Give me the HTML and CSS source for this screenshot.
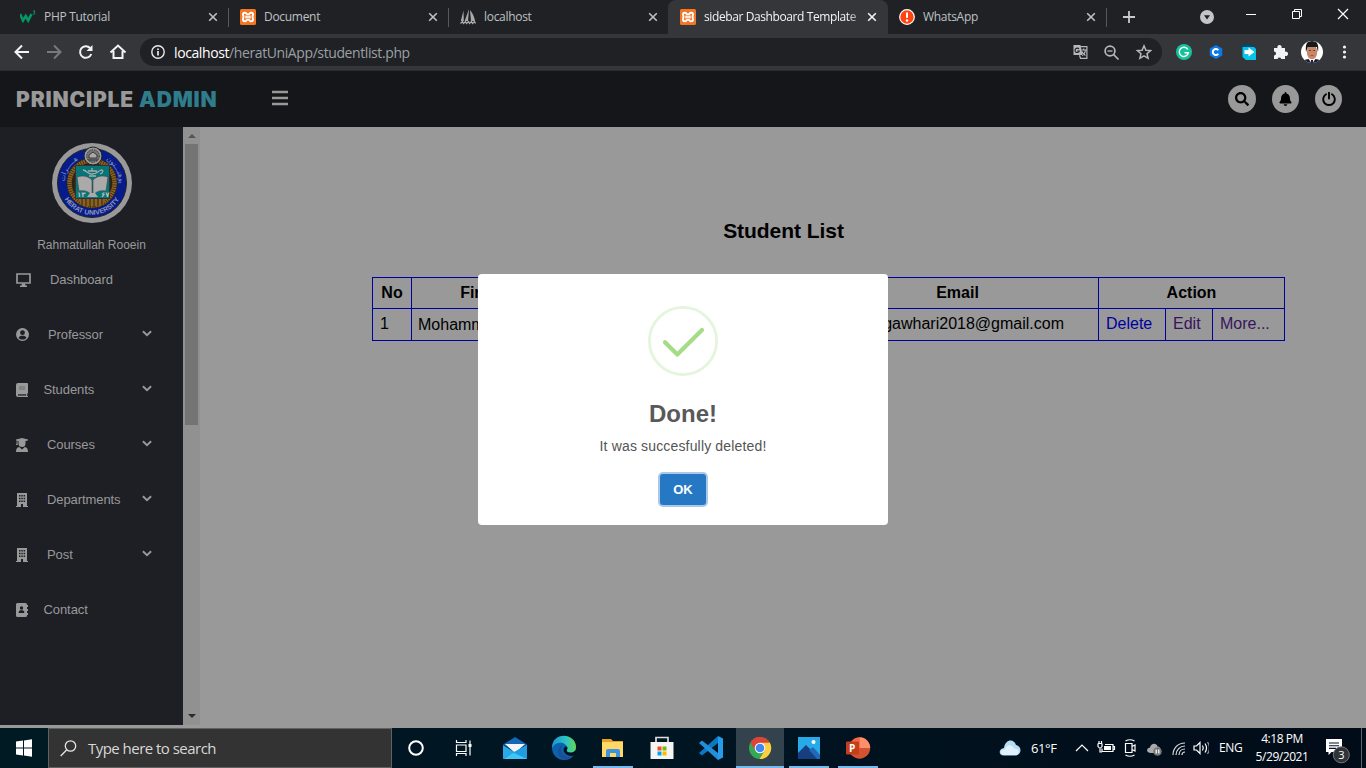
FILE: index.html
```html
<!DOCTYPE html>
<html lang="en">
<head>
<meta charset="utf-8">
<title>sidebar Dashboard Template</title>
<link rel="stylesheet" href="styles.css">
</head>
<body>
<svg class="defs" width="0" height="0">
  <symbol id="xampp" viewBox="0 0 16 16"><rect width="16" height="16" rx="1.5" fill="#f37623"/><path d="M5 3.7C3 3.7 2.6 5 3.2 6.6c.4 1 .4 1.800 0 2.800C2.600 11 3 12.300 5 12.300c1.500 0 1.400-1.800 3-1.800s1.500 1.800 3 1.800c2 0 2.400-1.300 1.800-2.900-.4-1-.4-1.800 0-2.800C13.400 5 13 3.700 11 3.700c-1.500 0-1.400 1.800-3 1.800S6.500 3.700 5 3.700z" fill="none" stroke="#fff" stroke-width="1.900"/><path d="M5.500 8h5M6 6.500v3M10 6.500v3" stroke="#fff" stroke-width="1.300"/></symbol>
  <symbol id="close" viewBox="0 0 10 10"><path d="M1.200 1.200l7.600 7.600M8.800 1.200L1.200 8.800" stroke="currentColor" stroke-width="1.600"/></symbol>
  <symbol id="down" viewBox="0 0 10 7"><path d="M.900 1.200L5 5.200l4.100-4" fill="none" stroke="currentColor" stroke-width="1.900"/></symbol>
  <symbol id="building" viewBox="0 0 12 14"><path fill="currentColor" fill-rule="evenodd" d="M1 0h10v13h1v1H7v-3H5v3H0v-1h1zM3 2v1.500h1.500V2zm2.300 0v1.500h1.500V2zm2.300 0v1.500h1.500V2zM3 4.700v1.500h1.500V4.700zm2.300 0v1.500h1.500V4.700zm2.300 0v1.500h1.500V4.700zM3 7.400v1.500h1.500V7.400zm2.300 0v1.500h1.500V7.400zm2.300 0v1.500h1.500V7.400z"/></symbol>
</svg>

<div class="tabs">
  <div class="tab"><svg class="fav" viewBox="0 0 16 16"><path d="M0 5l3 6.500L5.700 7l2.500 4.500L11.500 5" fill="none" stroke="#059862" stroke-width="2.600"/><path d="M13 2h2l-1.200 1.300c1.600 0 1.600 2.300-.8 2" fill="none" stroke="#059862"/></svg><span>PHP Tutorial</span><svg class="x"><use href="#close"/></svg></div>
  <div class="tab"><svg class="fav"><use href="#xampp"/></svg><span>Document</span><svg class="x"><use href="#close"/></svg></div>
  <div class="tab noline"><svg class="fav" viewBox="0 0 16 16"><path d="M3.500 1.500L.8 12h3zM9 0L4.700 12H8zM10 1c3 4 4.500 7 5 11h-4z" fill="#aaa"/><path d="M.5 14.500l2-2 1 2 2-2 1 2 2-2 1 2 2-2 1 2 2-2 1 2" fill="none" stroke="#aaa" stroke-width="1.300"/></svg><span>localhost</span><svg class="x"><use href="#close"/></svg></div>
  <div class="tab active"><svg class="fav"><use href="#xampp"/></svg><span>sidebar Dashboard Template</span><svg class="x"><use href="#close"/></svg></div>
  <div class="tab last"><svg class="fav" viewBox="0 0 16 16"><circle cx="8" cy="8" r="7.300" fill="#ff4413" stroke="#fff" stroke-width="1.200"/><path d="M8 3.500v5.200" stroke="#fff" stroke-width="2"/><circle cx="8" cy="11.500" r="1.200" fill="#fff"/></svg><span>WhatsApp</span><svg class="x"><use href="#close"/></svg></div>
  <svg class="plus" viewBox="0 0 12 12"><path d="M6 0v12M0 6h12" stroke="#c8cacd" stroke-width="1.800"/></svg>
  <svg class="winctl" viewBox="0 0 174 34"><circle cx="15" cy="17" r="7" fill="#c2c5c9"/><path d="M12 15.300h6L15 19.500z" fill="#202124"/><path d="M54 14.500h10" stroke="#fff"/><path d="M100.500 11.500h7v7h-7zM102.500 11.500v-2h7v7h-2" fill="none" stroke="#fff"/><path d="M146 9l10 10M156 9l-10 10" stroke="#fff" stroke-width="1.200"/></svg>
</div>

<div class="toolbar">
  <svg class="nav" viewBox="0 0 132 36" fill="none" stroke="#f1f3f4" stroke-width="2"><path d="M29 18H16.500M22 11.500L15.500 18l6.500 6.500"/><path stroke="#77797c" d="M47 18h12.500M54 11.500l6.500 6.500-6.500 6.500"/><path d="M91.300 20a5.800 5.800 0 1 1-1.200-6"/><path d="M92.500 11v6h-6z" fill="#f1f3f4" stroke="none"/><path d="M110.500 18.500l7.500-7 7.500 7M113.500 17v7h9v-7" /></svg>
  <div class="omni">
    <svg class="info" viewBox="0 0 14 14"><circle cx="7" cy="7" r="6.200" fill="none" stroke="#e8eaed" stroke-width="1.400"/><path d="M7 6v4.500M7 3.500v1.600" stroke="#e8eaed" stroke-width="1.700"/></svg>
    <span class="url"><b>localhost</b>/heratUniApp/studentlist.php</span>
    <svg class="omi" viewBox="-1.500 0 96 36"><path fill="#b5b8bc" d="M6 11h7l2 10H6z"/><path fill="none" stroke="#b5b8bc" stroke-width="1.200" d="M13 12.600h6.400v11.700H13l-1-3M13.800 16h5M16.200 14.500V16M14.500 21.500c2-1 3.300-3 3.300-5.500M14.500 17.500c.5 2 2 3.300 3.500 4"/><path d="M11.500 15a2.200 2.200 0 1 0 .3 2H9.700" fill="none" stroke="#202124" stroke-width="1.100"/><g fill="none" stroke="#b5b8bc" stroke-width="1.700"><circle cx="42.500" cy="17" r="4.900"/><path d="M46 20.500l5 5"/><path stroke-width="1.300" d="M40 17h5"/></g><path d="M76.500 11.800l1.900 4.400 4.700.4-3.600 3.100 1.100 4.600-4.100-2.400-4.100 2.400 1.100-4.600-3.600-3.100 4.700-.4z" fill="none" stroke="#b5b8bc" stroke-width="1.500"/></svg>
  </div>
  <svg class="ext" viewBox="0 0 204 36"><circle cx="22" cy="18" r="8" fill="#15c39a"/><path d="M25.800 15.500a4.600 4.600 0 1 0 .6 3.200H22.500" fill="none" stroke="#fff" stroke-width="1.400"/><path d="M54 11l6.200 3.500v7L54 25l-6.200-3.500v-7z" fill="#0b79e8"/><path d="M56.300 16.300a3 3 0 1 0 0 3.400" fill="none" stroke="#fff" stroke-width="2"/><path d="M79.500 10.500h12l-2 8h-8v-3h-2z" fill="#00486c"/><path d="M80.500 13h11.500l2 2v11H84l-3.500-3z" fill="#06c5e8"/><path d="M82.500 16h4v-2.500l6 4.500-6 4.500V20h-4z" fill="#fff"/><path d="M112 14h3.500a2.200 2.200 0 1 1 4 0h3.500v3.800a2.200 2.200 0 1 1 0 4V25h-3.700a2 2 0 0 0-3.800 0H112v-3.500a2 2 0 1 0 0-4z" fill="#f1f3f4"/><g><clipPath id="ava"><circle cx="150" cy="18" r="11"/></clipPath><g clip-path="url(#ava)"><path fill="#fff" d="M138 6h24v24h-24z"/><path fill="#182036" d="M140 30c1-5 5-5 10-5s9 0 10 5z"/><path fill="#fff" d="M146 24h8l-4 6z"/><ellipse cx="150" cy="18" rx="5.200" ry="7.300" fill="#c88768"/><path d="M144 18c-1-8 1-11 6-11s7 3 6 11l-1.200-5h-9z" fill="#17191d"/><path d="M147 16.500h2M151 16.500h2" stroke="#6b4536"/><path d="M148.500 21.500h3" stroke="#9d5348"/><path d="M149 26h2v4h-2z" fill="#182036"/></g></g><g fill="#f1f3f4"><circle cx="182.500" cy="13" r="1.600"/><circle cx="182.500" cy="18" r="1.600"/><circle cx="182.500" cy="23" r="1.600"/></g></svg>
</div>

<header class="header">
  <div class="brand">PRINCIPLE <em>ADMIN</em></div>
  <svg class="burger" viewBox="0 0 16 16"><path d="M0 2h16M0 8h16M0 14h16" stroke="#999" stroke-width="2.600"/></svg>
  <div class="round"><svg width="14" height="14" viewBox="0 0 512 512"><path d="M505 442.700L405.300 343c-4.500-4.500-10.600-7-17-7H372c27.600-35.300 44-79.700 44-128C416 93.100 322.900 0 208 0S0 93.100 0 208s93.100 208 208 208c48.300 0 92.700-16.400 128-44v16.300c0 6.400 2.500 12.500 7 17l99.700 99.700c9.400 9.400 24.600 9.400 33.900 0l28.300-28.300c9.400-9.400 9.400-24.600.1-34zM208 336c-70.700 0-128-57.200-128-128 0-70.700 57.200-128 128-128 70.700 0 128 57.200 128 128 0 70.700-57.200 128-128 128z"/></svg></div>
  <div class="round narrow"><svg width="13" height="14" viewBox="0 0 448 512"><path d="M224 512c35.320 0 63.970-28.650 63.970-64H160.030c0 35.350 28.650 64 63.970 64zm215.390-149.710c-19.320-20.760-55.470-51.990-55.470-154.290 0-77.700-54.480-139.900-127.940-155.160V32c0-17.670-14.320-32-31.980-32s-31.980 14.330-31.980 32v20.840C118.560 68.100 64.080 130.300 64.080 208c0 102.300-36.150 133.530-55.470 154.290-6 6.450-8.660 14.160-8.610 21.710.11 16.400 12.980 32 32.100 32h383.800c19.120 0 32-15.600 32.100-32 .05-7.550-2.610-15.270-8.610-21.710z"/></svg></div>
  <div class="round narrow"><svg width="14" height="14" viewBox="0 0 14 14"><path d="M4 2.300a5.800 5.800 0 1 0 6 0M7 .5v6" fill="none" stroke="#000" stroke-width="1.900" stroke-linecap="round"/></svg></div>
</header>

<div class="page">
  <nav class="side">
    <svg class="seal" viewBox="0 0 80 80">
      <circle cx="40" cy="40" r="40" fill="#999"/><circle cx="40" cy="40" r="34.500" fill="#071c8c" stroke="#222" stroke-width="1"/><circle cx="40" cy="40" r="25.500" fill="#2b2518"/><circle cx="40" cy="40" r="22.500" fill="none" stroke="#8d611e" stroke-width="4.500" stroke-dasharray="1.700 .6"/>
      <path d="M26 55h28l-4 8H30z" fill="#8d611e"/><path d="M30 55v8M34 55v8M38 55v9M42 55v9M46 55v8M50 55v8" stroke="#2b2518"/>
      <path d="M23.500 22.500h34v33h-34z" fill="#067577" stroke="#333"/>
      <circle cx="41" cy="13" r="9" fill="#999" stroke="#222"/><circle cx="41" cy="13" r="6.300" fill="#777" stroke="#333" stroke-dasharray="1.500 1"/><path d="M37 15v-3l4-3 4 3v3zM36 17h10" fill="#aaa" stroke="#222" stroke-width=".8"/>
      <path d="M25 34c6-2 11-1 15 3v15c-4-4-8-5-13-4zM56 34c-6-2-11-1-15 3v15c4-4 8-5 13-4z" fill="#aaa" stroke="#444" stroke-width=".6"/><path d="M38 50h5l3 4H35z" fill="#aaa"/>
      <path d="M31 27c5 1 4 4 9 4s6-3 9-4c3 0 2 3-1 4M36 28h9M40 25v3M37 33h7" fill="none" stroke="#aaa" stroke-width="1.300"/>
      <path id="arcb" d="M8.200 40a31.800 31.800 0 0 0 63.600 0" fill="none"/><text class="sealtext"><textPath href="#arcb" startOffset="50%" text-anchor="middle">HERAT UNIVERSITY</textPath></text>
      <path id="arcl" d="M13 45A27.500 27.500 0 0 1 32 14" fill="none"/><path id="arcr" d="M50 15A27.500 27.500 0 0 1 67 45" fill="none"/>
      <text class="sealar"><textPath href="#arcl" startOffset="50%" text-anchor="middle">هـــــرات</textPath></text><text class="sealar"><textPath href="#arcr" startOffset="50%" text-anchor="middle">پوهنـــتون</textPath></text>
      <text class="sealnum" x="25" y="54">۱۳</text><text class="sealnum" x="49" y="54">۶۷</text>
    </svg>
    <div class="name">Rahmatullah Rooein</div>
    <ul class="menu">
      <li class="g1"><svg width="15" height="14" viewBox="0 0 15 14"><path d="M1 1h13v9H1z" fill="none" stroke="#999" stroke-width="1.700"/><path d="M6 10.500h3l.5 2H11V14H4v-1.500h1.500z" fill="#999"/></svg>Dashboard</li>
      <li class="g2"><svg width="13" height="13" viewBox="0 0 13 13"><circle cx="6.500" cy="6.500" r="6.500" fill="#999"/><circle cx="6.500" cy="4.700" r="2.400" fill="#1e1f25"/><path d="M2.600 10c.6-2 2-2.300 3.900-2.300s3.300.3 3.900 2.300c-2.200 2-5.600 2-7.800 0z" fill="#1e1f25"/></svg>Professor<svg class="dn"><use href="#down"/></svg></li>
      <li class="g3"><svg width="12" height="14" viewBox="0 0 12 14"><path d="M2 0h9a1 1 0 0 1 1 1v9l-.8 1v2h.8v1H2a2 2 0 0 1-2-2V2a2 2 0 0 1 2-2z" fill="#999"/><path d="M2 11.300h8.200v1.300H2z" fill="#1e1f25"/><path d="M3 4h6M3 6h6" stroke="#6b6b70"/></svg>Students<svg class="dn"><use href="#down"/></svg></li>
      <li class="g4"><svg width="12" height="14" viewBox="0 0 12 14"><path d="M6 0l6 1.500v1L9.500 3v2.500a3.500 3.500 0 0 1-7 0V3L1.500 2.800V5L2 7H0l.6-2V2.600L0 2.500v-1zM3.200 9L6 11.500 8.800 9C11 9.500 12 11 12 14H0c0-3 1-4.500 3.200-5z" fill="#999"/></svg>Courses<svg class="dn"><use href="#down"/></svg></li>
      <li class="g4"><svg width="12" height="14"><use href="#building"/></svg>Departments<svg class="dn"><use href="#down"/></svg></li>
      <li class="g4"><svg width="12" height="14"><use href="#building"/></svg>Post<svg class="dn"><use href="#down"/></svg></li>
      <li class="g3"><svg width="12" height="14" viewBox="0 0 12 14"><path d="M1.500 0h8A1.500 1.500 0 0 1 11 1.500V2h1v2h-1v2h1v2h-1v2h1v2h-1v.500A1.500 1.500 0 0 1 9.500 14h-8A1.500 1.500 0 0 1 0 12.500v-11A1.500 1.500 0 0 1 1.500 0z" fill="#999"/><circle cx="5.500" cy="5" r="1.700" fill="#1e1f25"/><path d="M2.700 10c0-2.500 1-2.800 2.800-2.800s2.800.3 2.800 2.800z" fill="#1e1f25"/></svg>Contact</li>
    </ul>
  </nav>
  <div class="scroll"><i class="up"></i><div class="thumb"></div><i class="dnarrow"></i></div>
  <main class="main">
    <h2>Student List</h2>
    <table>
      <colgroup><col class="c1"><col class="c2"><col class="c3"><col class="c4"><col class="c5"><col class="c6"><col class="c7"></colgroup>
      <tr><th>No</th><th>First Name</th><th>Last Name</th><th>Email</th><th colspan="3">Action</th></tr>
      <tr><td>1</td><td class="first">Mohammad</td><td></td><td class="mail">gawhari2018@gmail.com</td><td><a class="new">Delete</a></td><td><a>Edit</a></td><td><a>More...</a></td></tr>
    </table>
  </main>
  <div class="modal">
    <svg class="ok-icon" viewBox="0 0 70 70"><circle cx="35" cy="35" r="33.600" fill="none" stroke="#e4f5db" stroke-width="2.800"/><path d="M17 36.300L29.300 48.500 54 24" fill="none" stroke="#a5dc86" stroke-width="4.200" stroke-linecap="round" stroke-linejoin="round"/></svg>
    <h3>Done!</h3>
    <p>It was succesfully deleted!</p>
    <button>OK</button>
  </div>
</div>

<footer class="task">
  <svg class="start" viewBox="0 0 48 40"><path fill="#fff" d="M16 13.500l7-1v7h-7zM24 12.400l8-1.100v8.200h-8zM16 20.500h7v7l-7-1zM24 20.500h8v8.200l-8-1.100z"/></svg>
  <div class="search"><svg width="17" height="17" viewBox="0 0 17 17"><circle cx="10.500" cy="6" r="5.200" fill="none" stroke="#e6e6e6" stroke-width="1.300"/><path d="M6.800 9.800L.7 16" stroke="#e6e6e6" stroke-width="1.300"/></svg><span>Type here to search</span></div>
  <div class="apps">
    <div><svg viewBox="0 0 48 40"><circle cx="24" cy="20" r="6.800" fill="none" stroke="#fff" stroke-width="2"/></svg></div>
    <div><svg viewBox="0 0 48 40" fill="none" stroke="#fff" stroke-width="1.200"><path d="M15.500 12v2.500h9.500V12M15.500 17h9.500v6.500h-9.500zM15.500 28v-2.500h9.500V28M29 12.500v15"/><path d="M27.500 16h3v3h-3z" fill="#fff" stroke="none"/></svg></div>
    <div class="mailapp"><svg viewBox="0 0 48 40"><path d="M12 16.500L24 9l12 7.500-12 7z" fill="#1267b8"/><path d="M14 16h20l-10 9z" fill="#f4f5f8"/><path d="M12 17l12 7.500L12 31z" fill="#29a9ea"/><path d="M36 17v14H12z" fill="#3ec8f5"/><path d="M36 17v14L22 24.500z" fill="#1f9de0"/></svg></div>
    <div class="mailapp"><svg viewBox="0 0 48 40"><defs><linearGradient id="eg"><stop stop-color="#1894d8"/><stop offset=".6" stop-color="#2dc5c2"/><stop offset="1" stop-color="#62d94d"/></linearGradient></defs><circle cx="24" cy="20" r="12" fill="#0b62ad"/><path d="M12 20C12 3 36 5 36 19c0 5-5 7-9 5-2-1 0-2 0-4 0-6-11-8-15 0z" fill="url(#eg)"/><path d="M23 17c-4 3-1 12 6 12 3 0 5-1 5-2-5 8-16 4-16-3 0-4 2-6 5-7z" fill="#1b4f98"/><path d="M27.500 20c0 2-2 3 .5 4 3 1.500 6 0 7.500-1.500l1 0v2l-2 2c-1 1-2 1.500-3 1.500-5 0-9-4-7.500-8 1-2 3.500-2 3.500 0z" fill="#03111d"/></svg></div>
    <div class="run"><svg viewBox="0 0 48 40"><path d="M13 11h9l2 2h10v4H13z" fill="#e6a322"/><path d="M13 14h21v15H13z" fill="#ffd868"/><path d="M17 29v-6q0-2 2-2h10q2 0 2 2v6h-4v-4h-6v4z" fill="#3d94dc"/></svg></div>
    <div><svg viewBox="0 0 48 40"><path d="M18 14V9.500h12V14" fill="none" stroke="#ddd" stroke-width="1.700"/><path d="M12.500 14h23v17h-23z" fill="#f5f5f5"/><path d="M19.500 18.500h4v4h-4z" fill="#f25022"/><path d="M24.500 18.500h4v4h-4z" fill="#7fba00"/><path d="M19.500 23.500h4v4h-4z" fill="#00a4ef"/><path d="M24.500 23.500h4v4h-4z" fill="#ffb900"/></svg></div>
    <div><svg viewBox="0 0 48 40"><path d="M31 8l5 2.400v19.200L31 32z" fill="#259ce9"/><path d="M31 8v7L15 27.500 12 25z" fill="#0879c5"/><path d="M31 32v-7L15 12.500 12 15z" fill="#238fdb"/></svg></div>
    <div class="run cur"><svg viewBox="0 0 48 40"><circle cx="24" cy="20" r="11" fill="#34a853"/><path d="M24 20L14.500 14.500A11 11 0 0 1 33.500 14.500z" fill="#db4437"/><path d="M24 14.500h9.700A11 11 0 0 1 23.500 31L29 22z" fill="#ffcd40"/><path d="M14.500 14.500l5 8.500L24 14.500h9.500A11 11 0 0 0 14.500 14.500z" fill="#db4437"/><circle cx="24" cy="20" r="5.300" fill="#fff"/><circle cx="24" cy="20" r="4.300" fill="#4285f4"/></svg></div>
    <div class="run"><svg viewBox="0 0 48 40"><path d="M13 9h22v22H13z" fill="#28a9e8"/><path d="M13 25l8-8 14 14H13z" fill="#153f80"/><path d="M24 22l4-3 7 8v4h-3z" fill="#2268b8"/><circle cx="28.500" cy="14" r="2" fill="#fff"/></svg></div>
    <div class="run"><svg viewBox="0 0 48 40"><circle cx="25.500" cy="20" r="10.700" fill="#d35230"/><path d="M25.500 9.300A10.700 10.700 0 0 1 36.200 20H25.500z" fill="#ff8f6b"/><path d="M25.500 9.300V20h-10A10.700 10.700 0 0 1 25.500 9.300z" fill="#ed6c47"/><rect x="12" y="13.500" width="13" height="13" rx="1" fill="#c43e1c"/><text class="pp" x="15" y="24">P</text></svg></div>
  </div>
  <div class="tray">
    <svg class="cloud" viewBox="0 0 22 16"><path d="M5 15.500C-1 15.500-.5 8.500 5 8 6-1 15-2 17 5c6 1 6 9.500 0 10.500z" fill="#b9dcf5"/><path d="M4 15C-.5 12 3 9 6 9.500c1-5 7-6 9.500-.5 4-1 6 3 2 6z" fill="#e1f2ff"/></svg>
    <span class="temp">61°F</span>
    <svg class="sys" viewBox="0 0 138 40" fill="none" stroke="#fff" stroke-width="1.200"><path d="M5 23l6-6 6 6"/><path d="M34 16.500h8v7H31v-3M42.500 18.500h1v3h-1M27 15.500h4M27 15.500v3q2 3 4 0v-3M28 13v2.500M30.500 13v2.500M29 20v4h2"/><path d="M33 18h7v4h-7z" fill="#fff" stroke="none"/><path d="M54.500 15.500h6.500v9h-6.500zM61 18.500l3-1.500v6L61 21.500M54.500 13q4.500-2.500 9 0M54.500 27q4.500 2.500 9 0"/><path d="M80 25c-5 0-5-5-1-5.500 1-5 7-4.500 7.500-1 4 0 4 6.500 0 6.500z" fill="#aaa" stroke="none"/><circle cx="86.500" cy="23.500" r="4.300" fill="#777" stroke="none"/><path d="M85.200 21.500v4M87.800 21.500v4"/><g stroke="#ddd"><path d="M102 27c0-7 5-12 12-12M105 27c0-5 4-9 9-9M108 27c0-4 3-6 6-6M111 27c0-2 1-3 3-3"/></g><path d="M123 18h2.500l3.500-3.500v11l-3.500-3.500H123zM131.500 17.500q1.500 2.500 0 5M134 15.500q3 4.500 0 9"/><path stroke="#999" d="M136.500 14q4 6 0 12"/></svg>
    <span class="eng">ENG</span>
    <div class="clock"><span>4:18 PM</span><span class="date">5/29/2021</span></div>
    <svg class="note" viewBox="0 0 28 28"><path d="M1 3h16v13H6.500L3.500 19v-3H1z" fill="#fff"/><path d="M4 7h10M4 9.700h10M4 12.400h7" stroke="#071320" stroke-width="1.100"/><circle cx="16.300" cy="18.800" r="8" fill="#303338" stroke="#777"/><text class="badge" x="13.200" y="23">3</text></svg>
    <i class="peek"></i>
  </div>
</footer>
</body>
</html>
```

FILE: styles.css
```css
* { box-sizing: border-box; }
body { margin: 0; width: 1366px; height: 768px; overflow: hidden; display: flex; flex-direction: column; background: #999; font-family: "Liberation Sans", Arial, sans-serif; }
svg { display: block; flex: none; }
.defs { position: absolute; }

.tabs { height: 34px; flex: none; background: #202124; display: flex; align-items: center; padding-left: 8px; font: 12px "Open Sans", "Noto Sans", sans-serif; color: #bdc1c6; }
.tab { width: 220px; height: 34px; display: flex; align-items: center; padding: 0 10px 1px 12px; position: relative; letter-spacing: -.3px; }
.tab::after { content: ""; position: absolute; right: -1px; top: 8px; width: 1px; height: 19px; background: #55575b; }
.tab.noline::after, .tab.active::after { display: none; }
.tab.active { background: #35363a; border-radius: 8px 8px 0 0; color: #f1f3f4; padding-right: 11px; }
.tab.last { width: 218px; padding-left: 11px; }
.tab span { flex: 1; margin-left: 8px; white-space: nowrap; overflow: hidden; }
.tab.active span { -webkit-mask-image: linear-gradient(90deg, #000 88%, transparent); mask-image: linear-gradient(90deg, #000 88%, transparent); letter-spacing: -.4px; }
.fav { width: 16px; height: 16px; }
.x { width: 10px; height: 10px; }
.plus { width: 12px; height: 12px; margin-left: 17px; }
.winctl { width: 174px; height: 34px; margin-left: auto; }

.toolbar { height: 37px; flex: none; background: #35363a; border-bottom: 1px solid #2b2c2f; display: flex; align-items: center; }
.nav { width: 132px; height: 36px; }
.omni { width: 1022px; height: 28px; margin-left: 8px; border-radius: 14px; background: #202124; display: flex; align-items: center; padding-left: 11px; }
.info { width: 14px; height: 14px; }
.url { margin-left: 9px; font: 14px "Open Sans", "Noto Sans", sans-serif; color: #9aa0a6; letter-spacing: -.4px; }
.url b { font-weight: 400; color: #fff; }
.omi { width: 96px; height: 36px; margin-left: auto; }
.ext { width: 204px; height: 36px; }

.header { height: 56px; flex: none; background: #151619; display: flex; align-items: center; padding: 0 24px 0 16px; }
.brand { width: 256px; font: 900 21px Inter, sans-serif; color: #999; white-space: nowrap; letter-spacing: .85px; }
.brand em { font-style: normal; color: #2f7c8c; }
.burger { width: 16px; height: 16px; margin: -2px auto 0 0; }
.round { width: 28px; height: 28px; border-radius: 50%; background: #999; display: flex; align-items: center; justify-content: center; }
.round.narrow { width: 27px; height: 28px; margin-left: 16px; }

.page { height: 601px; flex: none; display: flex; position: relative; }
.side { width: 183px; height: 598px; background: #1e1f25; color: #999; padding-top: 16px; }
.seal { width: 80px; height: 80px; margin-left: 52px; }
.sealtext { font: bold 6.800px "Liberation Sans", sans-serif; fill: #8f97b5; }
.sealar { font: 7px "DejaVu Sans", sans-serif; fill: #8f97b5; }
.sealnum { font: bold 7px "DejaVu Sans", sans-serif; fill: #bbb; }
.name { height: 14px; line-height: 14px; margin: 15px 0 0; text-align: center; font-size: 12px; }
.menu { list-style: none; margin: 0; padding: 0 31px 0 16px; font-size: 13px; letter-spacing: -.08px; }
.menu li { height: 55px; display: flex; align-items: center; }
.menu li svg:first-child { margin-right: 15.500px; }
.menu .g1 svg:first-child, .menu .g2 svg:first-child { margin-right: 19px; }
.menu .g4 svg:first-child { margin-right: 19px; }
.dn { width: 10px; height: 7px; margin: -3px 0 0 auto; }
.scroll { width: 17px; height: 598px; background: #919191; display: flex; flex-direction: column; align-items: center; }
.up { border: 4px solid transparent; border-top: 0; border-bottom: 4px solid #555; margin-top: 7px; }
.thumb { width: 13px; height: 281px; background: #747474; margin-top: 6px; }
.dnarrow { border: 4px solid transparent; border-bottom: 0; border-top: 4px solid #2b2b2b; margin: auto 0 7px; }

.main { flex: 1; padding: 91px 0 0 172px; }
h2 { margin: 0; width: 823px; text-align: center; font-size: 21px; line-height: 26px; color: #000; letter-spacing: -.05px; }
table { border-collapse: collapse; table-layout: fixed; width: 913px; margin-top: 33px; font-size: 16px; color: #000; }
th, td { border: 1px solid #0000a0; height: 31px; padding: 0 6px; text-align: left; white-space: nowrap; }
th { text-align: center; }
tr + tr td { height: 32px; padding: 0 6px 2px 7px; }
tr + tr td.first { padding: 0 6px; }
.c1 { width: 39px; } .c2 { width: 180px; } .c3 { width: 225px; } .c4 { width: 282px; } .c5 { width: 67px; } .c6 { width: 47px; } .c7 { width: 72px; }
tr + tr td.mail { text-align: right; padding-right: 34px; }
td a { color: #36145c; }
td a.new { color: #0000a0; }

.modal { position: absolute; left: 478px; top: 147px; width: 410px; height: 251px; background: #fff; border-radius: 4px; display: flex; flex-direction: column; align-items: center; padding-top: 32px; }
.ok-icon { width: 70px; height: 70px; }
h3 { margin: 23px 0 0; font-size: 24px; line-height: 30px; color: #595959; }
.modal p { margin: 8px 0 0; font-size: 14px; line-height: 18px; color: #545454; letter-spacing: .16px; }
button { width: 46px; height: 31px; margin-top: 19px; padding: 0; border: 0; border-radius: 3px; background: #2778c4; color: #fff; font: bold 13px "Liberation Sans", sans-serif; box-shadow: 0 0 0 2px #a9c9e7; }

.task { height: 40px; flex: none; display: flex; background: linear-gradient(90deg, #001a24, #001522 50%, #020b18); color: #fff; font-family: "Open Sans", "Noto Sans", sans-serif; }
.start { width: 48px; height: 40px; }
.search { width: 344px; height: 40px; border: 1px solid #5f6062; background: #333; display: flex; align-items: center; padding-left: 11px; font-size: 15px; color: #d8d8d8; letter-spacing: -.53px; }
.search span { margin-left: 11px; }
.apps { display: flex; }
.apps > div { width: 48px; height: 40px; margin-right: 1.150px; position: relative; }
.apps svg { width: 48px; height: 40px; }
.apps .mailapp svg { margin-left: 1px; }
.run::after { content: ""; position: absolute; left: 4px; right: 4px; bottom: 0; height: 2px; background: #76b9ed; }
.cur { background: #33434e; }
.cur::after { left: 0; right: 0; }
.pp { font: bold 10px "Open Sans", sans-serif; fill: #fff; }
.tray { flex: 1; display: flex; align-items: center; justify-content: flex-end; font-size: 12px; }
.cloud { width: 22px; height: 16px; }
.temp { width: 40px; margin-left: 10px; font-size: 13px; letter-spacing: -.4px; }
.sys { width: 138px; height: 40px; }
.eng { width: 32px; margin: -2px 0 0 10px; letter-spacing: -.3px; }
.clock { width: 56px; margin-left: 3px; display: flex; flex-direction: column; align-items: center; line-height: 18px; letter-spacing: -.45px; white-space: nowrap; }
.note { width: 28px; height: 28px; margin: 4px 12px 0 15px; }
.badge { font: 11px "Open Sans", sans-serif; fill: #fff; }
.peek { width: 1px; height: 40px; background: #5d646c; margin-right: 4px; margin-left: -4px; }
```
